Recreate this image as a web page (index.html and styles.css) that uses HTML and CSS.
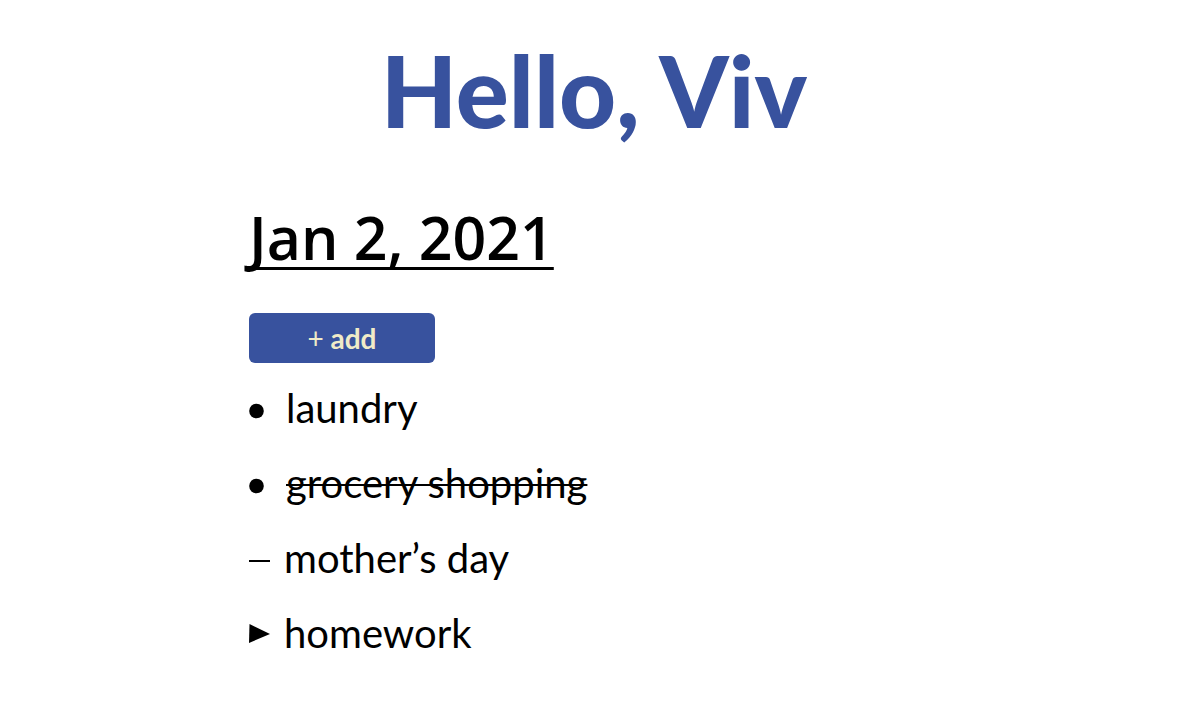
FILE: index.html
```html
<!DOCTYPE html>
<html lang="en">
<head>
<meta charset="utf-8">
<meta name="viewport" content="width=device-width, initial-scale=1">
<title>Hello, Viv</title>
<link rel="stylesheet" href="styles.css">
</head>
<body>
<main class="journal">
  <h1 class="greeting">Hello, Viv</h1>
  <section class="day">
    <h2 class="date">Jan 2, 2021</h2>
    <button class="add" type="button"><span class="plus">+</span> add</button>
    <ul class="entries">
      <li class="entry task">
        <svg class="mark" viewBox="0 0 22 22" aria-hidden="true"><circle cx="7.500" cy="14" r="7.300"/></svg>
        <span>laundry</span>
      </li>
      <li class="entry task">
        <svg class="mark" viewBox="0 0 22 22" aria-hidden="true"><circle cx="7.500" cy="14" r="7.300"/></svg>
        <s>grocery shopping</s>
      </li>
      <li class="entry">
        <svg class="mark" viewBox="0 0 22 22" aria-hidden="true"><path d="M0 13h21v2H0z"/></svg>
        <span>mother’s day</span>
      </li>
      <li class="entry">
        <svg class="mark" viewBox="0 0 22 22" aria-hidden="true"><path d="M.5 2L21 12 0 21z"/></svg>
        <span>homework</span>
      </li>
    </ul>
  </section>
</main>
</body>
</html>
```
FILE: styles.css
```css
* { box-sizing: border-box; }
body {
  margin: 0;
  background: #fff;
  color: #000;
  font-family: Lato, "Open Sans", sans-serif;
}
.journal { padding: 30px 20px; }
.greeting {
  margin: 0;
  padding-right: 16px;
  color: #38529e;
  font-family: Lato, sans-serif;
  font-size: 99px;
  font-weight: 900;
  line-height: 120px;
  text-align: center;
}
.day {
  max-width: 706px;
  margin: 47px auto 0;
}
.date {
  margin: 0;
  font-family: "Open Sans", sans-serif;
  font-size: 59px;
  font-weight: 600;
  line-height: 80px;
  text-decoration: underline;
  text-decoration-thickness: 3px;
  text-decoration-skip-ink: none;
  text-underline-offset: 7px;
}
.add {
  display: block;
  width: 186px;
  height: 50px;
  margin: 36px 0 7px;
  padding: 0;
  border: 0;
  border-radius: 6px;
  background: #38529e;
  color: #f0ebc8;
  font: 700 28px/50px Lato, sans-serif;
  cursor: pointer;
}
.plus { font-weight: 400; }
.entries { margin: 0; padding: 0; list-style: none; }
.entry {
  display: flex;
  align-items: center;
  gap: 13px;
  height: 75px;
  font-size: 40px;
}
.task { gap: 15px; }
.mark { width: 22px; height: 22px; flex: none; }
s { text-decoration-thickness: 2px; }
```
